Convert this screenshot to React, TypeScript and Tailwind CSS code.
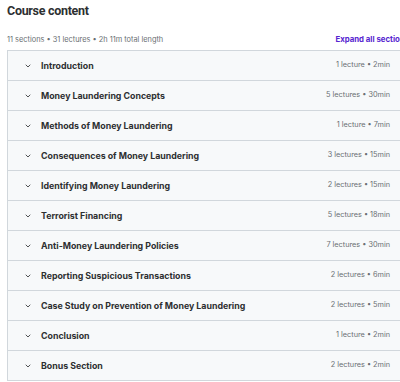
import React from 'react';
import { ChevronDown } from 'lucide-react';

const sections = [
    { title: 'Introduction', meta: '1 lecture • 2min' },
    { title: 'Money Laundering Concepts', meta: '5 lectures • 30min' },
    { title: 'Methods of Money Laundering', meta: '1 lecture • 7min' },
    { title: 'Consequences of Money Laundering', meta: '3 lectures • 15min' },
    { title: 'Identifying Money Laundering', meta: '2 lectures • 15min' },
    { title: 'Terrorist Financing', meta: '5 lectures • 18min' },
    { title: 'Anti-Money Laundering Policies', meta: '7 lectures • 30min' },
    { title: 'Reporting Suspicious Transactions', meta: '2 lectures • 6min' },
    { title: 'Case Study on Prevention of Money Laundering', meta: '2 lectures • 5min' },
    { title: 'Conclusion', meta: '1 lecture • 2min' },
    { title: 'Bonus Section', meta: '2 lectures • 2min' },
];

export default function App() {
    return (
        <div className="w-[400px] h-[382px] overflow-hidden bg-white text-[#2d2f31]" style={{ fontFamily: 'Inter, "Noto Sans", sans-serif' }}>
            <div className="w-[420px] pl-[7px]">
                <h2 className="pt-[1px] text-[12.5px] leading-[20px] font-bold tracking-[-0.3px] font-[Roboto,sans-serif]">Course content</h2>

                <div className="flex items-center justify-between h-[29px] pt-[8px] w-[402px]">
                    <span className="text-[7.4px] text-[#6a6f73]">11 sections • 31 lectures • 2h 11m total length</span>
                    <span className="text-[7.8px] font-bold text-[#5624d0]">Expand all sections</span>
                </div>

                {/* Section list */}
                <div className="w-[413px] border-t border-l border-[#d1d7dc]">
                    {sections.map((s) => (
                        <div key={s.title} className="flex items-center h-[30px] pl-[16px] pr-[30px] bg-[#f7f9fa] border-b border-[#d1d7dc]">
                            <ChevronDown className="w-[8px] h-[8px] text-[#2d2f31]" strokeWidth={2.5} />
                            <span className="ml-[9px] text-[8.8px] font-bold flex-1">{s.title}</span>
                            <span className="text-[7.3px] text-[#6a6f73]">{s.meta}</span>
                        </div>
                    ))}
                </div>
            </div>
        </div>
    );
}
